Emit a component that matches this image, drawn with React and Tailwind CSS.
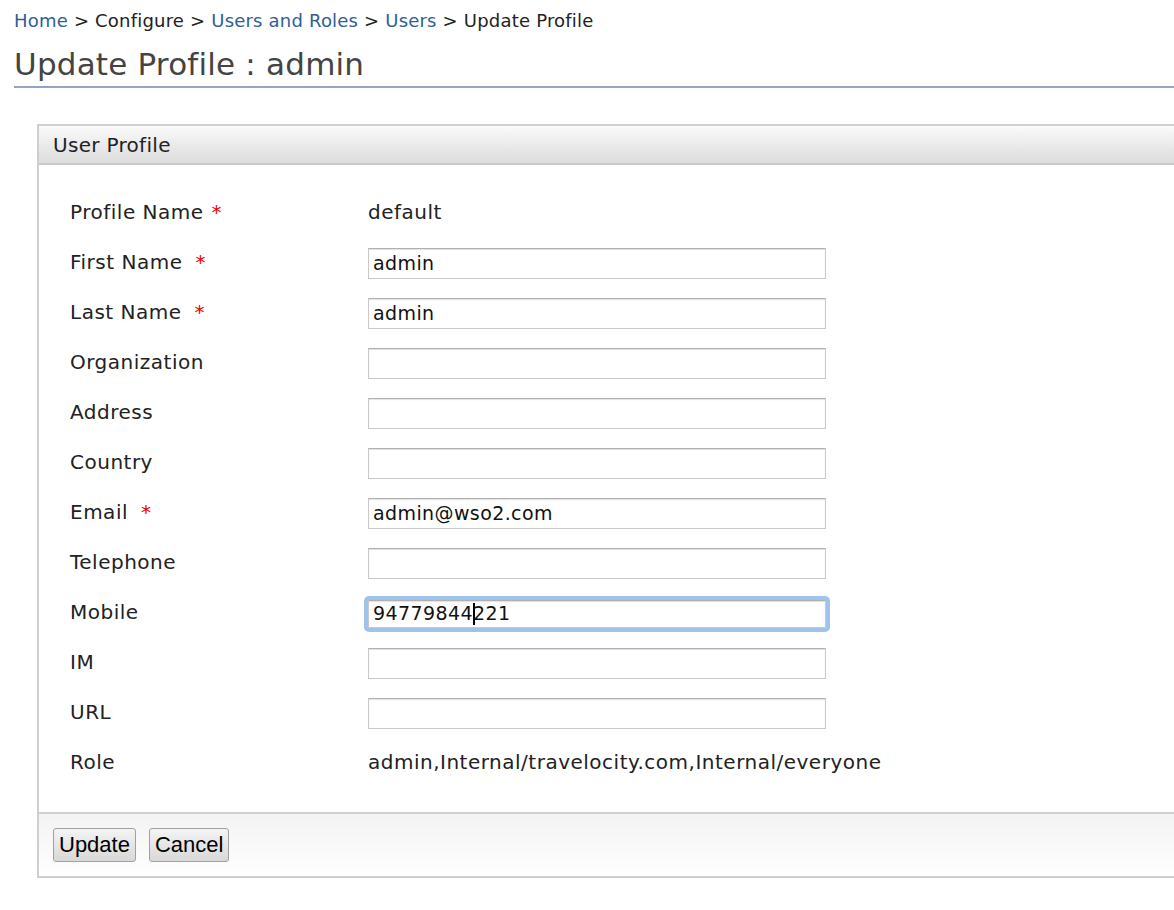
import React from "react";

const rows = [
  { label: "Profile Name", req: true, text: "default" },
  { label: "First Name", req: true, wide: true, value: "admin" },
  { label: "Last Name", req: true, wide: true, value: "admin" },
  { label: "Organization", value: "" },
  { label: "Address", value: "" },
  { label: "Country", value: "" },
  { label: "Email", req: true, wide: true, value: "admin@wso2.com" },
  { label: "Telephone", value: "" },
  { label: "Mobile", value: "94779844221", focus: true },
  { label: "IM", value: "" },
  { label: "URL", value: "" },
  { label: "Role", text: "admin,Internal/travelocity.com,Internal/everyone" },
];

const App = () => {
  return (
    <div className="min-h-screen bg-white text-[#222] font-['DejaVu_Sans',sans-serif] overflow-hidden">
      <div className="pl-[14px] pt-[9px]">
        <div className="text-[18px] leading-[24px] tracking-[0.2px]">
          <span className="text-[#2e5f95]">Home</span> &gt; Configure &gt;{" "}
          <span className="text-[#2e5f95]">Users and Roles</span> &gt;{" "}
          <span className="text-[#2e5f95]">Users</span> &gt; Update Profile
        </div>
        <h1 className="mt-[11px] text-[31px] leading-[40px] tracking-[0.2px] text-[#444] pb-[2px] border-b-2 border-[#93a5c4]">
          Update Profile : admin
        </h1>
      </div>

      <div className="ml-[37px] mt-[36px] border-l-2 border-y-2 border-[#cfcfcf] w-[1200px]">
        <div className="h-[39px] flex items-center pl-[14px] text-[20px] tracking-[0.3px] text-[#222] bg-gradient-to-b from-[#fafafa] to-[#dcdcdc] border-b-2 border-[#cacaca]">
          User Profile
        </div>
        <div className="pt-[22px] pb-[25px]">
          {rows.map((r) => (
            <div key={r.label} className="flex items-center h-[50px] pl-[31px] text-[20px] tracking-[0.5px]">
              <div className="w-[298px] shrink-0">
                {r.label}
                {r.req && (
                  <span className={r.wide ? "text-[#e00] ml-[13px]" : "text-[#e00] ml-[8px]"}>*</span>
                )}
              </div>
              {r.text !== undefined ? (
                <div>{r.text}</div>
              ) : (
                <div
                  className={
                    r.focus
                      ? "w-[466px] h-[36px] rounded-[5px] p-[4px] bg-[#9fc3ea] -ml-[4px] mt-[3px]"
                      : "w-[458px] h-[31px] mt-[3px]"
                  }
                >
                  <div className="w-full h-full bg-white border border-[#c9c9c9] border-t-[#b0b0b0] shadow-[inset_0_1px_1px_rgba(0,0,0,0.12)] flex items-center pl-[4px] text-[19px] tracking-[0.4px] text-[#111]">
                    {r.focus ? (
                      <>
                        94779844
                        <span className="inline-block w-[2px] h-[22px] bg-black -mr-[2px]" />
                        221
                      </>
                    ) : (
                      r.value
                    )}
                  </div>
                </div>
              )}
            </div>
          ))}
        </div>
        <div className="border-t-2 border-[#cfcfcf] bg-gradient-to-b from-[#f3f3f3] to-white h-[64px] flex items-center gap-[13px] pl-[14px]">
          <button className="h-[34px] px-[5px] border border-[#a0a0a0] rounded-[3px] bg-gradient-to-b from-[#f4f4f4] to-[#d8d8d8] text-[22px] font-['Liberation_Sans',sans-serif] text-black leading-none">
            Update
          </button>
          <button className="h-[34px] px-[5px] border border-[#a0a0a0] rounded-[3px] bg-gradient-to-b from-[#f4f4f4] to-[#d8d8d8] text-[22px] font-['Liberation_Sans',sans-serif] text-black leading-none">
            Cancel
          </button>
        </div>
      </div>
    </div>
  );
};

export default App;
